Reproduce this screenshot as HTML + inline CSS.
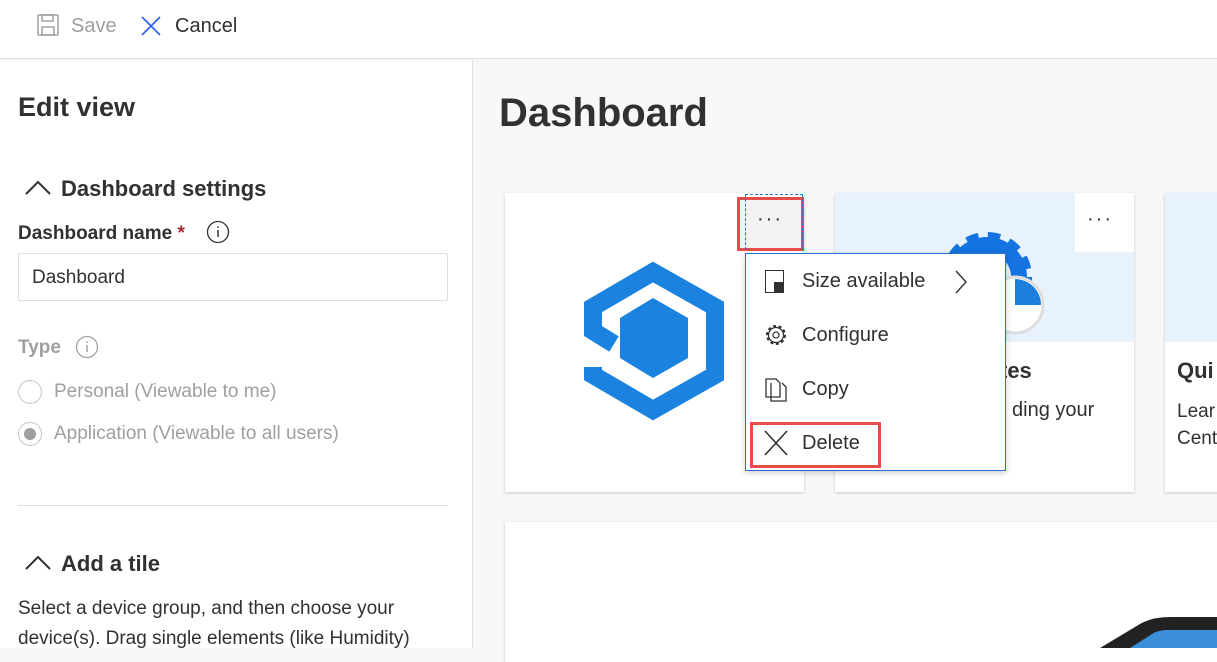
<!DOCTYPE html>
<html><head><meta charset="utf-8"><style>
*{margin:0;padding:0;box-sizing:border-box}
body{width:1217px;height:648px;overflow:hidden;font-family:"Segoe UI","Liberation Sans",sans-serif;color:#323130;background:#f8f8f8;position:relative}
.a{position:absolute;white-space:nowrap}
</style></head><body>
<div class="a" style="left:0;top:0;width:1217px;height:59px;background:#fff;border-bottom:1px solid #e1dfdd"></div>
<svg class="a" style="left:37px;top:14px" width="22" height="22" viewBox="0 0 22 22"><g fill="none" stroke="#a19f9d" stroke-width="1.5"><rect x="1" y="1" width="20" height="20" rx="1"/><rect x="5" y="1" width="11" height="6"/><rect x="5" y="13" width="12" height="8"/></g></svg>
<div class="a" style="left:71px;top:15px;font-size:20px;color:#a19f9d">Save</div>
<svg class="a" style="left:141px;top:16px" width="20" height="20" viewBox="0 0 20 20"><path d="M1 1L19 19M19 1L1 19" stroke="#2b5ff2" stroke-width="1.6"/></svg>
<div class="a" style="left:175px;top:15px;font-size:20px;color:#323130">Cancel</div>
<div class="a" style="left:0;top:60px;width:473px;height:588px;background:#fff;border-right:1px solid #e1dfdd"></div>
<div class="a" style="left:18px;top:92px;font-size:27px;font-weight:600">Edit view</div>
<svg class="a" style="left:25px;top:180px" width="26" height="16" viewBox="0 0 26 16"><path d="M1 14L13 2L25 14" fill="none" stroke="#323130" stroke-width="2"/></svg>
<div class="a" style="left:61px;top:176px;font-size:22px;font-weight:600">Dashboard settings</div>
<div class="a" style="left:18px;top:223px;font-size:19px;font-weight:600">Dashboard name <span style="color:#a4262c">*</span></div>
<svg class="a" style="left:206px;top:220px" width="24" height="24" viewBox="0 0 24 24"><circle cx="12" cy="12" r="10.5" fill="none" stroke="#323130" stroke-width="1.3"/><path d="M12 10v7M12 6.5v1.5" stroke="#323130" stroke-width="1.5"/></svg>
<div class="a" style="left:18px;top:253px;width:430px;height:48px;border:1px solid #e1dfdd;border-radius:2px"></div>
<div class="a" style="left:32px;top:267px;font-size:19px">Dashboard</div>
<div class="a" style="left:18px;top:337px;font-size:19px;font-weight:600;color:#a19f9d">Type</div>
<svg class="a" style="left:75px;top:335px" width="24" height="24" viewBox="0 0 24 24"><circle cx="12" cy="12" r="10.5" fill="none" stroke="#a19f9d" stroke-width="1.3"/><path d="M12 10v7M12 6.5v1.5" stroke="#a19f9d" stroke-width="1.5"/></svg>
<div class="a" style="left:18px;top:380px;width:24px;height:24px;border:1px solid #c8c6c4;border-radius:50%"></div>
<div class="a" style="left:54px;top:381px;font-size:19px;color:#a19f9d">Personal (Viewable to me)</div>
<div class="a" style="left:18px;top:422px;width:24px;height:24px;border:1px solid #c8c6c4;border-radius:50%"></div>
<div class="a" style="left:24px;top:428px;width:12px;height:12px;background:#a19f9d;border-radius:50%"></div>
<div class="a" style="left:54px;top:423px;font-size:19px;color:#a19f9d">Application (Viewable to all users)</div>
<div class="a" style="left:18px;top:505px;width:430px;height:1px;background:#e1dfdd"></div>
<svg class="a" style="left:25px;top:555px" width="26" height="16" viewBox="0 0 26 16"><path d="M1 14L13 2L25 14" fill="none" stroke="#323130" stroke-width="2"/></svg>
<div class="a" style="left:61px;top:551px;font-size:22px;font-weight:600">Add a tile</div>
<div class="a" style="left:18px;top:594px;font-size:19px;line-height:30px">Select a device group, and then choose your<br>device(s). Drag single elements (like Humidity)</div>
<div class="a" style="left:499px;top:91px;font-size:40px;font-weight:600">Dashboard</div>
<div class="a" style="left:505px;top:193px;width:299px;height:299px;background:#fff;box-shadow:0 1px 3px rgba(0,0,0,.2)"></div>
<svg class="a" style="left:0;top:0" width="1217" height="648" viewBox="0 0 1217 648"><path d="M614 344L593 331L593 307L653 272L715 307L715 375L653 410L593 375L593 367" fill="none" stroke="#1b82e0" stroke-width="18"/><path d="M653 298L688 318L688 358L653 378L620 358L620 318Z" fill="#1b82e0"/></svg>
<div class="a" style="left:737px;top:197px;width:67px;height:54px;background:#f3f2f1;border:3px solid #e84b4b"></div>
<div class="a" style="left:745px;top:194px;width:58px;height:56px;border:1px dashed #2b6fd6;border-bottom:none"></div>
<div class="a" style="left:757px;top:208px;font-size:20px;letter-spacing:2px">···</div>
<div class="a" style="left:835px;top:193px;width:299px;height:299px;background:#fff;box-shadow:0 1px 3px rgba(0,0,0,.2)"></div>
<div class="a" style="left:835px;top:193px;width:299px;height:149px;background:#e8f2fd"></div>
<svg class="a" style="left:930px;top:215px" width="120" height="125" viewBox="0 0 120 125"><circle cx="57" cy="62" r="40" fill="none" stroke="#1473e0" stroke-width="10" stroke-dasharray="12 9"/><circle cx="57" cy="62" r="32" fill="none" stroke="#1473e0" stroke-width="16"/><circle cx="85" cy="90" r="28" fill="#fff" stroke="#ddd" stroke-width="3"/><path d="M85 64A26 26 0 0 1 111 90L85 90Z" fill="#1b7fe0"/></svg>
<div class="a" style="left:1075px;top:193px;width:59px;height:59px;background:#fff"></div>
<div class="a" style="left:1087px;top:208px;font-size:20px;letter-spacing:2px">···</div>
<div class="a" style="left:1000px;top:358px;font-size:22px;font-weight:600">tes</div>
<div class="a" style="left:1012px;top:399px;font-size:20px">ding your</div>
<div class="a" style="left:1165px;top:193px;width:60px;height:299px;background:#fff;box-shadow:0 1px 3px rgba(0,0,0,.2)"></div>
<div class="a" style="left:1165px;top:193px;width:60px;height:149px;background:#e8f2fd"></div>
<div class="a" style="left:1177px;top:358px;font-size:22px;font-weight:600">Qui</div>
<div class="a" style="left:1177px;top:398px;font-size:19px;line-height:27px">Lear<br>Cent</div>
<div class="a" style="left:745px;top:253px;width:261px;height:218px;background:#fff;border:1px solid #2b6fd6;box-shadow:0 2px 6px rgba(0,0,0,.2)"></div>
<div class="a" style="left:765px;top:270px;width:19px;height:23px;border:1.5px solid #323130"></div>
<div class="a" style="left:774px;top:282px;width:10px;height:11px;background:#323130"></div>
<div class="a" style="left:802px;top:270px;font-size:20px">Size available</div>
<svg class="a" style="left:954px;top:270px" width="14" height="24" viewBox="0 0 14 24"><path d="M2 1L12 12L2 23" fill="none" stroke="#323130" stroke-width="1.4"/></svg>
<svg class="a" style="left:763px;top:322px" width="26" height="26" viewBox="0 0 26 26"><circle cx="13" cy="13" r="9" fill="none" stroke="#323130" stroke-width="2" stroke-dasharray="3 2.6"/><circle cx="13" cy="13" r="7.5" fill="none" stroke="#323130" stroke-width="1.2"/><circle cx="13" cy="13" r="3" fill="none" stroke="#323130" stroke-width="1.2"/></svg>
<div class="a" style="left:802px;top:324px;font-size:20px">Configure</div>
<svg class="a" style="left:765px;top:376px" width="22" height="26" viewBox="0 0 22 26"><path d="M1 3h10l4 4v14H1z" fill="none" stroke="#323130" stroke-width="1.3"/><path d="M6 7v18h15V11l-4-4" fill="none" stroke="#323130" stroke-width="1.3"/></svg>
<div class="a" style="left:802px;top:378px;font-size:20px">Copy</div>
<div class="a" style="left:750px;top:422px;width:131px;height:46px;border:3px solid #e84b4b"></div>
<svg class="a" style="left:764px;top:430px" width="24" height="26" viewBox="0 0 24 26"><path d="M1 1L23 25M23 1L1 25" stroke="#323130" stroke-width="1.6"/></svg>
<div class="a" style="left:802px;top:432px;font-size:20px">Delete</div>
<div class="a" style="left:505px;top:522px;width:720px;height:140px;background:#fff;box-shadow:0 1px 3px rgba(0,0,0,.2)"></div>
<svg class="a" style="left:1100px;top:612px" width="117" height="36" viewBox="0 0 117 36"><path d="M0 36L40 12Q52 5 70 5L117 5V36Z" fill="#222"/><path d="M30 36L52 22Q58 18 68 18L117 18V36Z" fill="#3a8fd8"/></svg>
</body></html>
